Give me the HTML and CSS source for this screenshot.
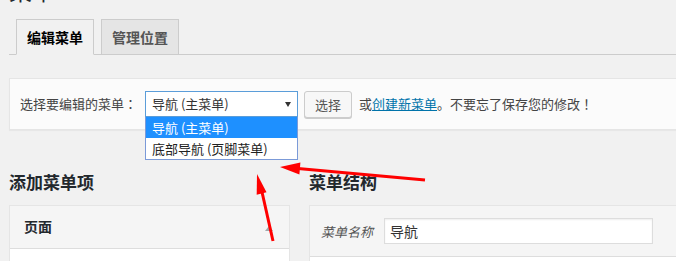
FILE: index.html
```html
<!DOCTYPE html>
<html>
    <head>
        <title>菜单</title>
        <link rel="stylesheet" href="styles.css">
    </head>
    <body>
        <div class="wrap">
            <h1 class="page-title">菜单</h1>

            <div class="nav-tabs">
                <a class="nav-tab active">编辑菜单</a>
                <a class="nav-tab">管理位置</a>
            </div>

            <div class="manage-menus">
                <span class="select-label">选择要编辑的菜单<span class="punct">：</span></span>
                <div class="fake-select">
                    <span>导航 (主菜单)</span>
                    <span class="select-arrow"></span>
                    <div class="select-options">
                        <div class="option selected">导航 (主菜单)</div>
                        <div class="option">底部导航 (页脚菜单)</div>
                    </div>
                </div>
                <button class="button">选择</button>
                <span class="add-new">或<a class="link">创建新菜单</a>。不要忘了保存您的修改<span class="punct">！</span></span>
            </div>

            <div class="columns">
                <div class="col-left">
                    <h2 class="col-title">添加菜单项</h2>
                    <div class="panel">
                        <div class="accordion-title">
                            <span>页面</span>
                            <span class="up-arrow"></span>
                        </div>
                        <div class="panel-body"></div>
                    </div>
                </div>
                <div class="col-right">
                    <h2 class="col-title">菜单结构</h2>
                    <div class="panel">
                        <div class="menu-header">
                            <label class="menu-name-label">菜单名称</label>
                            <input class="menu-name" type="text" value="导航">
                        </div>
                        <div class="panel-body"></div>
                    </div>
                </div>
            </div>
        </div>

        <svg class="arrows" width="676" height="261" viewBox="0 0 676 261">
            <line x1="425" y1="180" x2="298" y2="168.6" stroke="#f00" stroke-width="3"/>
            <polygon points="280,167 300.4,162.6 299.4,174.6" fill="#f00"/>
            <line x1="273" y1="241" x2="262" y2="192" stroke="#f00" stroke-width="3"/>
            <polygon points="257,174 266.5,192.3 256.7,194.7" fill="#f00"/>
        </svg>
    </body>
</html>
```

FILE: styles.css
```css
body {
    margin: 0;
    background: #f1f1f1;
    overflow: hidden;
    position: relative;
    font-family: "Noto Sans CJK SC", sans-serif;
    font-size: 13px;
    color: #444;
}
.wrap {
    padding-left: 9px;
    width: 740px;
}
.page-title {
    margin: -24px 0 0;
    font-size: 23px;
    font-weight: 400;
    line-height: 29px;
    color: #23282d;
}
.nav-tabs {
    display: flex;
    gap: 7px;
    margin-top: 14px;
    padding-left: 7px;
    border-bottom: 1px solid #ccc;
}
.nav-tab {
    display: block;
    margin-bottom: -1px;
    padding: 0 10px;
    border: 1px solid #ccc;
    background: #e5e5e5;
    font-size: 14px;
    font-weight: 700;
    line-height: 34px;
    color: #555;
}
.nav-tab.active {
    background: #f1f1f1;
    border-bottom-color: #f1f1f1;
    color: #000;
}
.manage-menus {
    display: flex;
    align-items: center;
    height: 50px;
    margin-top: 23px;
    padding: 0 10px;
    border: 1px solid #e5e5e5;
    background: #fbfbfb;
    box-shadow: 0 1px 1px rgba(0,0,0,.04);
}
.punct {
    font-family: "Noto Sans CJK TC", sans-serif;
}
.select-label {
    margin-right: 8px;
    line-height: 20px;
}
.fake-select {
    position: relative;
    display: flex;
    align-items: center;
    justify-content: space-between;
    box-sizing: border-box;
    width: 153px;
    height: 26px;
    padding: 0 6px 0 6px;
    border: 1px solid #5b9dd9;
    background: #fff;
    color: #333;
    line-height: 24px;
}
.select-arrow {
    width: 0;
    height: 0;
    border-left: 3px solid transparent;
    border-right: 3px solid transparent;
    border-top: 5px solid #333;
}
.select-options {
    position: absolute;
    top: 25px;
    left: -1px;
    box-sizing: border-box;
    width: 153px;
    border: 1px solid #7b9ad8;
    border-top: 0;
    background: #fff;
    z-index: 2;
}
.option {
    padding-left: 6px;
    line-height: 21px;
    color: #222;
}
.option.selected {
    background: #1e90ff;
    color: #fff;
}
.button {
    margin-left: 6px;
    height: 27px;
    padding: 0 10px;
    border: 1px solid #ccc;
    border-radius: 3px;
    background: #f7f7f7;
    box-shadow: 0 1px 0 #ccc;
    font-family: inherit;
    font-size: 13px;
    line-height: 25px;
    color: #555;
}
.add-new {
    margin-left: 7px;
    line-height: 20px;
}
.link {
    color: #0073aa;
    text-decoration: underline;
}
.columns {
    display: flex;
    gap: 19px;
    margin-top: 40px;
}
.col-left {
    width: 281px;
}
.col-right {
    flex: 1;
}
.col-title {
    margin: 0 0 12px;
    font-size: 17px;
    font-weight: 700;
    line-height: 23px;
    color: #23282d;
}
.panel {
    border: 1px solid #e5e5e5;
    background: #fff;
}
.accordion-title {
    display: flex;
    align-items: center;
    justify-content: space-between;
    padding: 10px 16px 11px 14px;
    border-bottom: 1px solid #ddd;
    background: #f5f5f5;
    font-size: 14px;
    font-weight: 700;
    line-height: 21px;
    color: #23282d;
}
.up-arrow {
    width: 0;
    height: 0;
    margin-top: 4px;
    border-left: 4px solid transparent;
    border-right: 4px solid transparent;
    border-bottom: 5px solid #a0a5aa;
}
.panel-body {
    height: 40px;
}
.menu-header {
    display: flex;
    align-items: center;
    padding: 12px 11px;
    border-bottom: 1px solid #ddd;
    background: #f5f5f5;
}
.menu-name-label {
    margin-right: 11px;
    font-style: italic;
    color: #555;
}
.menu-name {
    box-sizing: border-box;
    width: 269px;
    height: 26px;
    padding: 0 5px;
    border: 1px solid #ddd;
    box-shadow: inset 0 1px 2px rgba(0,0,0,.07);
    background: #fff;
    font-family: inherit;
    font-size: 14px;
    color: #333;
}
.arrows {
    position: absolute;
    top: 0;
    left: 0;
    pointer-events: none;
}
```
